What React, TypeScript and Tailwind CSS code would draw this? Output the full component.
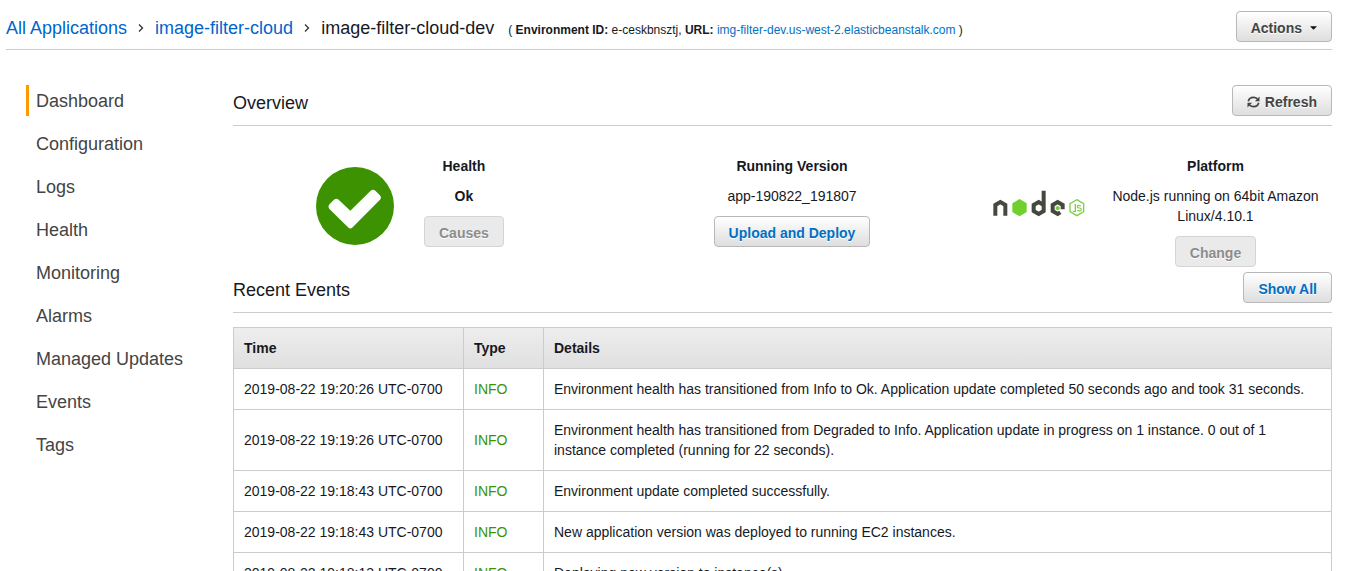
import type { ReactNode } from "react";

const navItems = [
  "Dashboard",
  "Configuration",
  "Logs",
  "Health",
  "Monitoring",
  "Alarms",
  "Managed Updates",
  "Events",
  "Tags",
];

const events = [
  {
    time: "2019-08-22 19:20:26 UTC-0700",
    details:
      "Environment health has transitioned from Info to Ok. Application update completed 50 seconds ago and took 31 seconds.",
  },
  {
    time: "2019-08-22 19:19:26 UTC-0700",
    details:
      "Environment health has transitioned from Degraded to Info. Application update in progress on 1 instance. 0 out of 1 instance completed (running for 22 seconds).",
  },
  {
    time: "2019-08-22 19:18:43 UTC-0700",
    details: "Environment update completed successfully.",
  },
  {
    time: "2019-08-22 19:18:43 UTC-0700",
    details: "New application version was deployed to running EC2 instances.",
  },
  {
    time: "2019-08-22 19:18:13 UTC-0700",
    details: "Deploying new version to instance(s).",
  },
];

const buttonTones = {
  plain: "border-[#b8b8b8] bg-linear-to-b from-white to-[#dedede] text-[#444]",
  link: "border-[#b8b8b8] bg-linear-to-b from-white to-[#dedede] text-[#0070c4]",
  disabled: "border-[#d5d5d5] bg-[#eaeaea] text-[#8c8c8c]",
};

function Button({ tone, children }: { tone: keyof typeof buttonTones; children: ReactNode }) {
  return (
    <button
      type="button"
      disabled={tone === "disabled"}
      className={`inline-flex h-[31px] shrink-0 items-center rounded border px-3.5 pt-0.5 text-sm font-bold whitespace-nowrap text-shadow-[0_1px_0_#fff] ${buttonTones[tone]}`}
    >
      {children}
    </button>
  );
}

function RefreshIcon() {
  return (
    <svg viewBox="0 0 13 12" className="mr-[5px] h-3 w-[13px]" fill="none" aria-hidden="true">
      <g stroke="currentColor" strokeWidth="1.700">
        <path d="M1.300 5.200C1.900 2.800 4 1.300 6.500 1.300C8 1.300 9.400 1.900 10.500 3" />
        <path d="M11.700 6.800C11.100 9.200 9 10.700 6.500 10.700C5 10.700 3.600 10.100 2.500 9" />
      </g>
      <path d="M12.500 0.600V5.200H7.900Z" fill="currentColor" />
      <path d="M0.500 11.400V6.800H5.100Z" fill="currentColor" />
    </svg>
  );
}

function HealthIcon() {
  return (
    <svg viewBox="0 0 234 234" className="mt-[11px] size-[78px] shrink-0" role="img" aria-label="Ok">
      <circle cx="117" cy="117" r="117" fill="#3c9200" />
      <path
        d="M41 111 L54 98 Q61 92 68 98 L103 131 L164 71 Q171 65 178 71 L191 84 Q198 91 192 98 L110 181 Q103 188 96 181 L41 127 Q34 119 41 111Z"
        fill="#fff"
      />
    </svg>
  );
}

function NodeLogo() {
  return (
    <svg viewBox="38 29 276 81" className="mt-[34px] h-[27px] w-[92px] shrink-0" role="img" aria-label="Node.js" fill="none">
      <g stroke="#46483e" strokeWidth="12">
        <path d="M45 106V74L60 65L75 74V106" />
        <path d="M190 31V92L175 101L160 92V74L175 65L190 74" />
        <path d="M240 96L232 101L217 92V74L232 65L247 74V87" />
      </g>
      <path d="M117.500 56L139 69V95L117.500 108L96 95V69Z" fill="#6fd02e" />
      <path d="M232 77L238 80V87L232 90L226 87V80Z" fill="#6fd02e" />
      <g stroke="#7fce45">
        <path d="M289.500 58L310 70V94L289.500 106L269 94V70Z" strokeWidth="4" />
        <path d="M285 71V92Q285 96 277 92" strokeWidth="4" />
        <path d="M302 77Q291 72 291 79Q291 83 297 83Q303 83 303 88Q302 94 291 90" strokeWidth="3.500" />
      </g>
    </svg>
  );
}

function Chevron() {
  return (
    <svg viewBox="0 0 6 10" className="mx-[11px] h-2.5 w-1.5" fill="none" stroke="#333" strokeWidth="1.300" aria-hidden="true">
      <path d="M1 0.500L4.500 4L1 7.500" />
    </svg>
  );
}

function SectionHeader({ title, children }: { title: string; children: ReactNode }) {
  return (
    <div className="flex h-[41px] items-start justify-between border-b border-[#ccc]">
      <h2 className="pt-1.5 text-lg leading-6">{title}</h2>
      {children}
    </div>
  );
}

function Stat({ title, value, children }: { title: string; value: ReactNode; children: ReactNode }) {
  return (
    <div className="flex flex-col items-center gap-2.5 text-center">
      <h3 className="font-bold">{title}</h3>
      <p>{value}</p>
      {children}
    </div>
  );
}

export default function App() {
  return (
    <div className="h-screen overflow-hidden bg-white pr-[13px] pl-1.5 font-['Liberation_Sans',Arial,sans-serif] text-sm leading-5 text-[#16191f]">
      <header className="flex h-[50px] items-start justify-between border-b border-[#ccc] pt-[11px]">
        <nav aria-label="Breadcrumb" className="flex items-baseline pt-[5px] text-lg leading-6 whitespace-nowrap">
          <a href="#applications" className="text-[#0064cd]">All Applications</a>
          <Chevron />
          <a href="#application" className="text-[#0064cd]">image-filter-cloud</a>
          <Chevron />
          <h1>image-filter-cloud-dev</h1>
          <span className="ml-3.5 text-xs">
            ( <b>Environment ID:</b> e-ceskbnsztj, <b>URL:</b>{" "}
            <a href="#environment" className="text-[#0070c4]">img-filter-dev.us-west-2.elasticbeanstalk.com</a> )
          </span>
        </nav>
        <Button tone="plain">
          Actions
          <svg viewBox="0 0 8 4" className="ml-2 h-1 w-[7px]" fill="#111" aria-hidden="true">
            <path d="M0 0H8L4 4Z" />
          </svg>
        </Button>
      </header>

      <div className="flex pt-[35px]">
        <nav aria-label="Environment" className="w-[227px] shrink-0 pl-5">
          <ul className="flex flex-col gap-3">
            {navItems.map((item, index) => (
              <li key={item}>
                <a
                  href={`#${item.toLowerCase().replace(" ", "-")}`}
                  aria-current={index === 0 ? "page" : undefined}
                  className={`block border-l-3 pt-0.5 pl-[7px] text-lg leading-[29px] text-[#444] ${
                    index === 0 ? "border-[#ff9900]" : "border-transparent"
                  }`}
                >
                  {item}
                </a>
              </li>
            ))}
          </ul>
        </nav>

        <main className="min-w-0 flex-1">
          <SectionHeader title="Overview">
            <Button tone="plain">
              <RefreshIcon />
              Refresh
            </Button>
          </SectionHeader>

          <section className="grid grid-cols-[358fr_402fr_339fr] pt-[30px] pb-[5px]">
            <div className="flex items-start gap-[30px] pl-[83px]">
              <HealthIcon />
              <Stat title="Health" value={<b>Ok</b>}>
                <Button tone="disabled">Causes</Button>
              </Stat>
            </div>
            <Stat title="Running Version" value="app-190822_191807">
              <Button tone="link">Upload and Deploy</Button>
            </Stat>
            <div className="flex items-start">
              <NodeLogo />
              <div className="flex-1 pr-1.5 pl-5">
                <Stat title="Platform" value="Node.js running on 64bit Amazon Linux/4.10.1">
                  <Button tone="disabled">Change</Button>
                </Stat>
              </div>
            </div>
          </section>

          <SectionHeader title="Recent Events">
            <Button tone="link">Show All</Button>
          </SectionHeader>

          <table className="mt-3.5 w-full table-fixed border-collapse text-left">
            <colgroup>
              <col className="w-[230px]" />
              <col className="w-20" />
              <col />
            </colgroup>
            <thead>
              <tr className="bg-linear-to-b from-[#eee] to-[#dfdfdf]">
                {["Time", "Type", "Details"].map((heading) => (
                  <th key={heading} scope="col" className="border border-[#ccc] p-2.5 font-bold">
                    {heading}
                  </th>
                ))}
              </tr>
            </thead>
            <tbody>
              {events.map((event) => (
                <tr key={event.details}>
                  <td className="border border-[#ccc] p-2.5">{event.time}</td>
                  <td className="border border-[#ccc] p-2.5 text-[#3c9200]">INFO</td>
                  <td className="border border-[#ccc] p-2.5">{event.details}</td>
                </tr>
              ))}
            </tbody>
          </table>
        </main>
      </div>
    </div>
  );
}
